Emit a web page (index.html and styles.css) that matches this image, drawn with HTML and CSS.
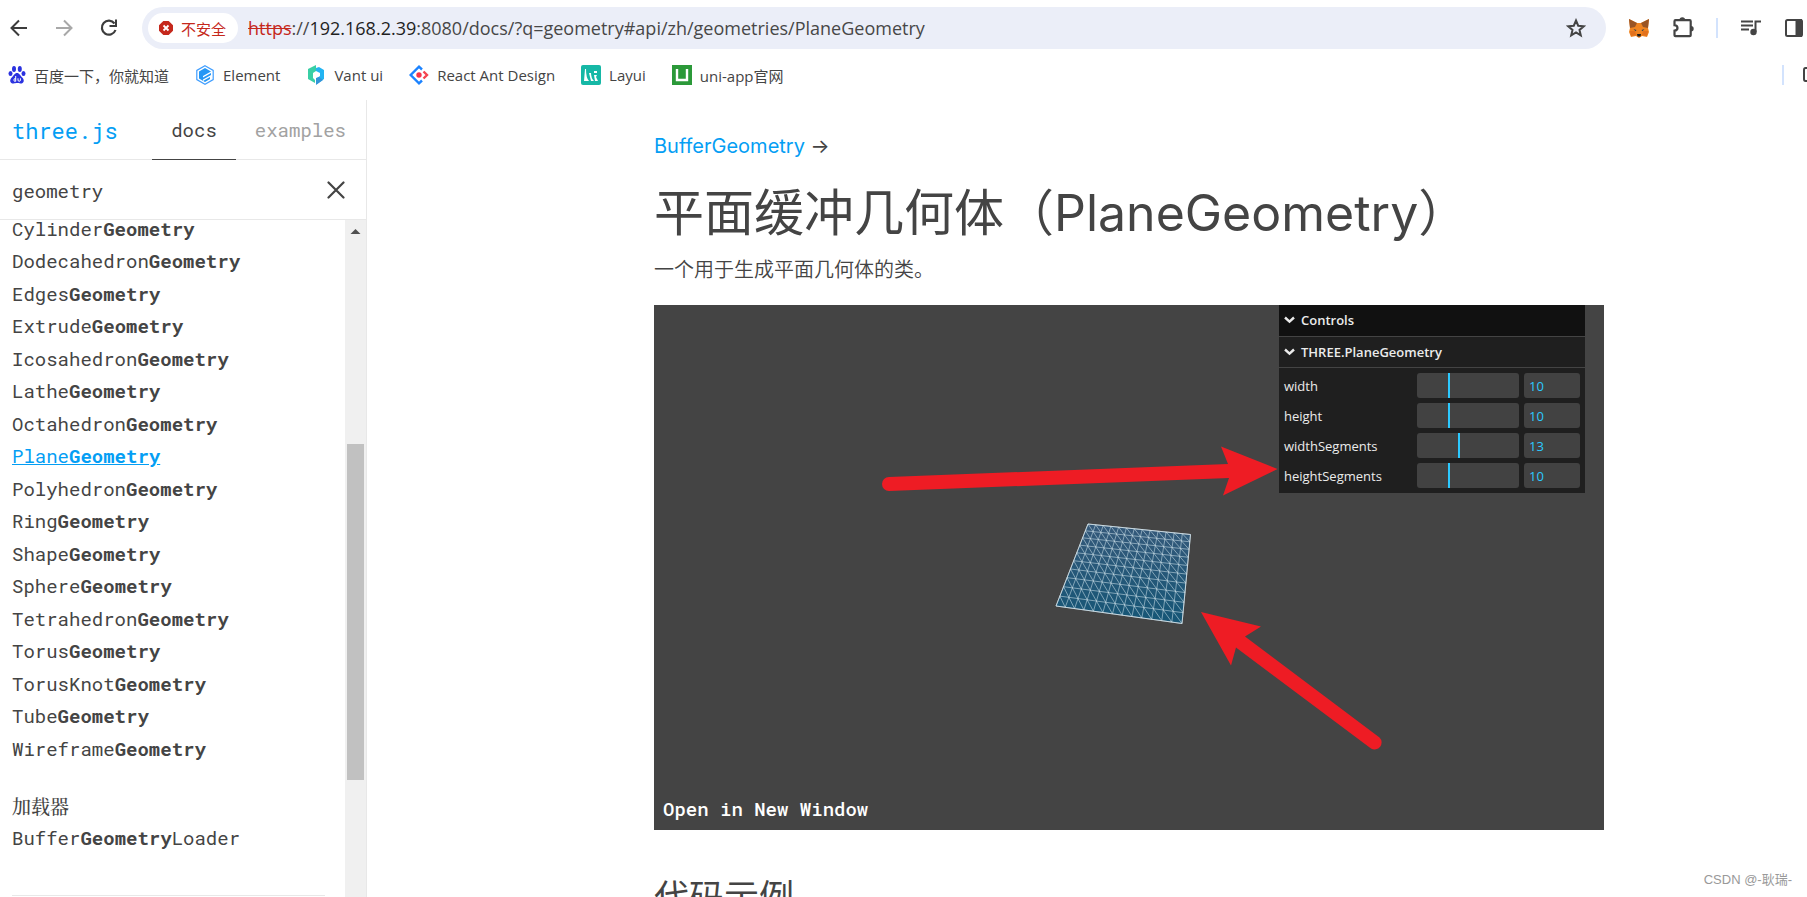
FILE: index.html
```html
<!DOCTYPE html>
<html lang="zh">
<head>
<meta charset="utf-8">
<title>PlaneGeometry - three.js docs</title>
<link rel="stylesheet" href="styles.css">
</head>
<body>
<header class="browser">
  <div class="toolbar">
    <button class="icon-btn" aria-label="Back"><svg width="20" height="20" viewBox="0 0 20 20" fill="none" stroke="#3c3c3c" stroke-width="2"><path d="M18 10H3M10 2.5 2.5 10l7.500 7.500"/></svg></button>
    <button class="icon-btn" aria-label="Forward"><svg width="20" height="20" viewBox="0 0 20 20" fill="none" stroke="#a8a8a8" stroke-width="2"><path d="M2 10h15M10 2.500 17.500 10 10 17.500"/></svg></button>
    <button class="icon-btn" aria-label="Reload"><svg width="20" height="20" viewBox="0 0 20 20" fill="none" stroke="#3c3c3c" stroke-width="2.200"><path d="M16.500 12A7 7 0 1 1 15.500 5.500"/><path d="M17 1.500v6.500h-6.500" stroke-width="2"/></svg></button>
    <div class="omnibox">
      <button class="chip"><svg width="14" height="14" viewBox="0 0 14 14"><path d="M4.300 0h5.400L14 4.300v5.400L9.700 14H4.300L0 9.700V4.300z" fill="#c5281c"/><path d="M4.500 4.500l5 5M9.500 4.500l-5 5" stroke="#fff" stroke-width="1.800"/></svg><span>不安全</span></button>
      <div class="url"><s>https</s>://<span class="host">192.168.2.39</span>:8080/docs/?q=geometry#api/zh/geometries/PlaneGeometry</div>
      <button class="icon-btn" aria-label="Bookmark"><svg width="20" height="20" viewBox="0 0 20 20" fill="none" stroke="#444" stroke-width="2"><path d="M10 2.500l2.200 5.200 5.600.5-4.300 3.700 1.300 5.500-4.800-2.900-4.800 2.900 1.300-5.500L2.200 8.200l5.600-.5z"/></svg></button>
    </div>
    <div class="extensions">
      <button class="icon-btn" aria-label="MetaMask"><svg width="22" height="20" viewBox="0 0 22 20"><path d="M1 1l8 4h4l8-4-1 9 1 4-2 5-5-1-3 2-3-2-5 1-2-5 1-4z" fill="#f08420"/><path d="M1 1l8 4-2 4-5 1zM21 1l-8 4 2 4 5 1z" fill="#9a5423"/><path d="M2 13h5l1 4-5 1zM20 13h-5l-1 4 5 1z" fill="#e2711d"/><path d="M5.500 11l3 1-1 1.200zM16.500 11l-3 1 1 1.200z" fill="#36414d"/><path d="M9 16h4l-.5 2.500h-3z" fill="#1f1d1d"/></svg></button>
      <button class="icon-btn" aria-label="Extensions"><svg width="22" height="22" viewBox="0 0 22 22"><path d="M2.500 4.200q0-1 1-1h14.200q1 0 1 1v14q0 1-1 1H3.500q-1 0-1-1v-4.500c4-.6 4-4.900 0-5.500z" fill="none" stroke="#444" stroke-width="2.200"/><path d="M7.500 3a2.800 2.800 0 0 1 5.600 0zM19 9a2.700 2.700 0 0 1 0 5.400z" fill="#444"/></svg></button>
      <span class="rule"></span>
      <button class="icon-btn" aria-label="Media"><svg width="22" height="20" viewBox="0 0 22 20" fill="none" stroke="#444" stroke-width="2"><path d="M1 3.500h12M1 7.500h12M1 11.500h8M15.500 14V3.500H21"/><circle cx="13.500" cy="14" r="2.200" fill="#444"/></svg></button>
      <button class="icon-btn" aria-label="Side panel"><svg width="20" height="20" viewBox="0 0 20 20"><rect x="2" y="2" width="16" height="16" rx="1.500" fill="none" stroke="#444" stroke-width="2"/><path d="M11.500 1H18v18h-6.500z" fill="#444"/></svg></button>
    </div>
  </div>
  <nav class="bookmarks">
    <a href="#baidu"><svg width="18" height="20" viewBox="0 0 18 20" fill="#2b32e0"><ellipse cx="6" cy="4" rx="2" ry="3"/><ellipse cx="11.800" cy="4" rx="2" ry="3"/><ellipse cx="2.500" cy="8.500" rx="2" ry="2.600"/><ellipse cx="15.500" cy="8.500" rx="2" ry="2.600"/><path d="M9 8c2.500 0 3 2.500 5 4.200 3 2.800 2 6.300-1.500 6.300-1.500 0-2-.4-3.500-.4s-2 .4-3.500.4C2 18.500 1 15 4 12.200 6 10.500 6.500 8 9 8z"/><path d="M7.700 11v5.300M7.700 13.800a1.300 1.300 0 1 0 0 2.400M10 13.300V15q0 1.300 1.200 1.300t1.200-1.300v-1.700" fill="none" stroke="#fff" stroke-width="1"/></svg>百度一下，你就知道</a>
    <a href="#element"><svg width="20" height="20" viewBox="0 0 20 20"><path d="M10 .8l8.200 4.600v9.200L10 19.200l-8.200-4.600V5.400z" fill="#fff" stroke="#409eff" stroke-width="1.200"/><path d="M10 3l6 3.400-8 4.600v1.500l8-4.500v2l-8 4.500v1.500l7-4V14l-5 3-6-3.500v-7z" fill="#2497f5"/></svg>Element</a>
    <a href="#vant"><svg width="20" height="20" viewBox="0 0 20 20"><path d="M10 0v6L7 8v5l2 2v3l-7-4V4z" fill="#39cfa5"/><path d="M10 3l3-1 5 3v9l-7 5v-6l3-2V8l-4-2z" fill="#23b4f2"/><path d="M10 20v-7l3-1 4 3z" fill="#3295d8"/></svg>Vant ui</a>
    <a href="#antd"><svg width="20" height="20" viewBox="0 0 20 20" fill="none" stroke-width="2.400"><path d="M13 4.500L10 1.700 1.700 10l8.300 8.300 3-2.800" stroke="#1c83ff"/><path d="M14.500 6.500L18 10l-3.500 3.500" stroke="#f5454f"/><circle cx="10" cy="10" r="1.500" fill="#f5344b" stroke="#f5344b"/></svg>React Ant Design</a>
    <a href="#layui"><svg width="20" height="20" viewBox="0 0 20 20"><rect width="20" height="20" rx="2" fill="#16b8a6"/><path d="M4 4h1q0 9 3 12H3zM8 8l2 8h3q-3-3-3-8zM13 6h3v2h-3zM13 10h3l-1 2 2 4h-3z" fill="#fff"/></svg>Layui</a>
    <a href="#uniapp"><svg width="20" height="20" viewBox="0 0 20 20"><path d="M0 0h20v20H0z" fill="#2b9939"/><path d="M5 4v11h10V4" fill="none" stroke="#fff" stroke-width="2.400"/></svg>uni-app官网</a>
    <span class="spacer"></span>
    <span class="rule"></span>
    <svg class="folder" width="4" height="20" viewBox="0 0 4 20" fill="none" stroke="#444" stroke-width="2"><path d="M5 3H2.500Q1 3 1 5v9q0 2 1.500 2H5"/></svg>
  </nav>
</header>

<div class="docs">
  <aside class="sidebar">
    <div class="brand-row">
      <h1 class="brand"><a href="#home">three.js</a></h1>
      <nav class="tabs"><a class="tab active" href="#docs">docs</a><a class="tab" href="#examples">examples</a></nav>
    </div>
    <div class="search">
      <input type="text" value="geometry" aria-label="Search">
      <button class="icon-btn" aria-label="Clear"><svg width="18" height="18" viewBox="0 0 18 18" stroke="#444" stroke-width="2.200" stroke-linecap="round"><path d="M1.500 1.500l15 15M16.500 1.500l-15 15"/></svg></button>
    </div>
    <div class="scroller">
      <div class="results">
        <ul>
          <li><a href="#1">Cylinder<b>Geometry</b></a></li>
          <li><a href="#2">Dodecahedron<b>Geometry</b></a></li>
          <li><a href="#3">Edges<b>Geometry</b></a></li>
          <li><a href="#4">Extrude<b>Geometry</b></a></li>
          <li><a href="#5">Icosahedron<b>Geometry</b></a></li>
          <li><a href="#6">Lathe<b>Geometry</b></a></li>
          <li><a href="#7">Octahedron<b>Geometry</b></a></li>
          <li><a class="selected" href="#8">Plane<b>Geometry</b></a></li>
          <li><a href="#9">Polyhedron<b>Geometry</b></a></li>
          <li><a href="#10">Ring<b>Geometry</b></a></li>
          <li><a href="#11">Shape<b>Geometry</b></a></li>
          <li><a href="#12">Sphere<b>Geometry</b></a></li>
          <li><a href="#13">Tetrahedron<b>Geometry</b></a></li>
          <li><a href="#14">Torus<b>Geometry</b></a></li>
          <li><a href="#15">TorusKnot<b>Geometry</b></a></li>
          <li><a href="#16">Tube<b>Geometry</b></a></li>
          <li><a href="#17">Wireframe<b>Geometry</b></a></li>
        </ul>
        <h3>加载器</h3>
        <ul>
          <li><a href="#18">Buffer<b>Geometry</b>Loader</a></li>
        </ul>
        <hr>
      </div>
      <div class="track">
        <svg width="21" height="21" viewBox="0 0 21 21"><path d="M5.500 14l5-5 5 5z" fill="#505050"/></svg>
        <div class="thumb"></div>
      </div>
    </div>
  </aside>

  <main class="page">
    <p class="crumb"><a href="#buffer">BufferGeometry</a> →</p>
    <h1 class="title">平面缓冲几何体（PlaneGeometry）</h1>
    <p class="desc">一个用于生成平面几何体的类。</p>
    <section class="scene">
      <svg class="drawing" viewBox="0 0 950 525">
        <defs><linearGradient id="shade" x1="0" y1="0" x2="0" y2="1"><stop offset="0" stop-color="#35597a"/><stop offset="1" stop-color="#155676"/></linearGradient></defs>
        <path d="M434 219l102.500 10.500L528 318.500 402 301z" fill="url(#shade)" stroke="#b4c2cb" stroke-width="1"/>
        <path id="mesh" fill="none" stroke="#d5e6ef" stroke-opacity=".6" stroke-width=".9"/>
        <g fill="#ee1c24">
          <path d="M235 172L574 159 567 141.500 623.500 164 569 190.500 575 173 235 186A7 7 0 0 1 235 172z"/>
          <path d="M547 307L607 321.500 591 331.500 725.500 432.500A7 7 0 0 1 717 443.500L582 342.500 577 360.500z"/>
        </g>
      </svg>
      <form class="gui">
        <button type="button" class="gui-title root"><svg width="11" height="8" viewBox="0 0 11 8" fill="none" stroke="#ebebeb" stroke-width="2.400"><path d="M1 1.500l4.500 4.200L10 1.500"/></svg>Controls</button>
        <button type="button" class="gui-title"><svg width="11" height="8" viewBox="0 0 11 8" fill="none" stroke="#ebebeb" stroke-width="2.400"><path d="M1 1.500l4.500 4.200L10 1.500"/></svg>THREE.PlaneGeometry</button>
        <div class="fields">
          <label for="w">width</label><input type="range" aria-label="width" min="0" max="100" value="31"><input id="w" type="text" value="10">
          <label for="h">height</label><input type="range" aria-label="height" min="0" max="100" value="31"><input id="h" type="text" value="10">
          <label for="ws">widthSegments</label><input type="range" aria-label="widthSegments" min="0" max="100" value="41"><input id="ws" type="text" value="13">
          <label for="hs">heightSegments</label><input type="range" aria-label="heightSegments" min="0" max="100" value="31"><input id="hs" type="text" value="10">
        </div>
      </form>
      <a class="open" href="#open">Open in New Window</a>
    </section>
    <h2 class="subtitle">代码示例</h2>
  </main>
</div>
<div class="watermark">CSDN @-耿瑞-</div>
<script src="mesh.js"></script>
</body>
</html>
```
FILE: styles.css
```css
* { box-sizing: border-box; }

body {
  margin: 0;
  height: 100vh;
  display: flex;
  flex-direction: column;
  overflow: hidden;
  background: #fff;
  color: #444;
  font-family: Inter, "Noto Sans CJK SC", sans-serif;
}

a { color: inherit; text-decoration: none; }
ul, h1, h2, h3, p { margin: 0; padding: 0; list-style: none; font-weight: 400; }
svg { flex: none; display: block; }
button { border: 0; background: none; padding: 0; font: inherit; color: inherit; }

.icon-btn { display: flex; align-items: center; justify-content: center; }

/* Browser chrome */
.browser { font-family: "Open Sans", "Noto Sans CJK SC", sans-serif; flex: none; height: 100px; }
.toolbar { display: flex; align-items: center; gap: 25px; padding: 7px 2px 0 9px; }
.omnibox {
  flex: 1;
  display: flex;
  align-items: center;
  height: 42px;
  margin-left: -2px;
  padding: 0 20px 0 6px;
  border-radius: 21px;
  background: #ebeef8;
}
.chip {
  display: flex;
  align-items: center;
  gap: 8px;
  height: 30px;
  padding: 0 12px 0 11px;
  border-radius: 15px;
  background: #fff;
  color: #c5281c;
  font-size: 15px;
}
.url { flex: 1; margin-left: 10px; font-size: 18px; line-height: 24px; white-space: nowrap; color: #474747; }
.url s { color: #c5281c; }
.host { color: #1f1f1f; }
.extensions { display: flex; align-items: center; gap: 22px; margin-left: -3px; padding-right: 1px; }
.rule { width: 2px; height: 20px; background: #d3e3fd; }

.bookmarks { display: flex; align-items: center; gap: 26px; height: 52px; padding-left: 8px; font-size: 15px; }
.bookmarks a { display: flex; align-items: center; gap: 8px; white-space: nowrap; }
.spacer { flex: 1; }
.folder { margin-left: -7px; }

/* Layout */
.docs { flex: 1; min-height: 0; display: grid; grid-template-columns: 367px 1fr; }

/* Sidebar */
.sidebar {
  display: flex;
  flex-direction: column;
  min-height: 0;
  border-right: 1px solid #e8e8e8;
  font-family: "Roboto Mono", "Liberation Mono", monospace;
  font-size: 19px;
}
.brand-row { flex: none; display: flex; justify-content: space-between; height: 60px; padding: 0 1px 0 12px; border-bottom: 1px solid #e8e8e8; }
.brand { font-size: 22px; line-height: 61px; color: #049ef4; }
.tabs { display: flex; }
.tab { padding: 0 19px; line-height: 60px; color: #a2a2a2; }
.tab.active { height: 60px; color: #444; border-bottom: 1px solid #444; }
.search { flex: none; display: flex; align-items: center; height: 60px; padding: 0 21px 0 12px; border-bottom: 1px solid #e8e8e8; }
.search input { flex: 1; min-width: 0; border: 0; padding: 2px 0 0; outline: 0; font: inherit; color: inherit; }
.scroller { flex: 1; min-height: 0; display: flex; overflow: hidden; }
.results { flex: 1; margin-top: -7px; padding: 0 20px 0 12px; line-height: 1.71; }
.results h3 { margin-top: 24px; font-family: "Noto Serif CJK SC", "Noto Sans CJK SC", serif; font-size: 19px; font-weight: 500; line-height: 33px; }
.results hr { margin: 40px 0 0; border: 0; border-top: 1px solid #e8e8e8; }
.selected { color: #049ef4; text-decoration: underline; }
.track { flex: none; display: flex; flex-direction: column; align-items: center; width: 21px; background: #f0f0f0; }
.thumb { width: 17px; height: 336px; margin-top: 203px; background: #c1c1c1; }

/* Page */
.page { padding: 30px 0 0 calc(20% - 1px); min-width: 0; }
.page > * { max-width: 950px; }
.crumb { font-size: 20px; line-height: 32px; }
.crumb a { color: #049ef4; }
.title { margin-top: 19px; font-size: 50px; line-height: 64px; white-space: nowrap; }
.desc { margin-top: 8px; font-size: 20px; line-height: 34px; font-weight: 350; }
.subtitle { margin-top: 41px; font-size: 35px; line-height: 52px; }

.scene {
  position: relative;
  display: flex;
  flex-direction: column;
  justify-content: space-between;
  margin-top: 18px;
  background: #444;
}
.drawing { width: 100%; }
.gui {
  position: absolute;
  top: 0;
  right: 19px;
  width: 306px;
  background: #1f1f1f;
  color: #ebebeb;
  font-family: "Open Sans", "Noto Sans", sans-serif;
  font-size: 13px;
}
.gui-title {
  display: flex;
  align-items: center;
  gap: 6px;
  width: 100%;
  height: 31px;
  padding: 0 5px;
  border-bottom: 1px solid #444;
  font-weight: 600;
}
.gui-title.root { height: 32px; padding-bottom: 2px; background: #111; }
.fields { display: grid; grid-template-columns: 1fr 102px 56px; gap: 5px; padding: 5px; }
.fields label { line-height: 26px; height: 25px; }
.fields input {
  min-width: 0;
  width: 100%;
  height: 25px;
  margin: 0;
  border: 0;
  border-radius: 3px;
  background: #424242;
  color: #2cc9ff;
  font: inherit;
}
.fields input[type="text"] { padding: 0 5px; }
.fields input[type="range"] { appearance: none; overflow: hidden; }
.fields input[type="range"]::-webkit-slider-thumb { appearance: none; width: 2px; height: 25px; background: #2cc9ff; }
.open {
  position: absolute;
  left: 9px;
  bottom: 9px;
  color: #fff;
  font: 500 19px/24px "Roboto Mono", "Liberation Mono", monospace;
}

.watermark {
  position: absolute;
  right: 15px;
  bottom: 7px;
  font: 13px/20px "Liberation Sans", "Noto Sans CJK SC", sans-serif;
  color: #999;
}
```
FILE: mesh.js
```js
// Projects a 13 x 10 segment plane onto its four screen corners.
const [p0, p1, p2, p3] = [[434, 219], [536.5, 229.5], [528, 318.5], [402, 301]];
const d1 = [p1[0] - p2[0], p1[1] - p2[1]];
const d2 = [p3[0] - p2[0], p3[1] - p2[1]];
const s = [p0[0] - p1[0] + p2[0] - p3[0], p0[1] - p1[1] + p2[1] - p3[1]];
const det = d1[0] * d2[1] - d2[0] * d1[1];
const g = (s[0] * d2[1] - d2[0] * s[1]) / det;
const h = (d1[0] * s[1] - s[0] * d1[1]) / det;

function project(u, v) {
  const w = g * u + h * v + 1;
  return [0, 1].map(i =>
    ((p1[i] - p0[i] + g * p1[i]) * u + (p3[i] - p0[i] + h * p3[i]) * v + p0[i]) / w
  ).join(' ');
}

const cols = 13, rows = 10;
let d = '';
const line = (a, b, c, e) => { d += `M${project(a, b)}L${project(c, e)}`; };
for (let i = 0; i <= cols; i++) line(i / cols, 0, i / cols, 1);
for (let j = 0; j <= rows; j++) line(0, j / rows, 1, j / rows);
for (let i = 0; i < cols; i++) {
  for (let j = 0; j < rows; j++) line(i / cols, j / rows, (i + 1) / cols, (j + 1) / rows);
}
document.getElementById('mesh').setAttribute('d', d);
```
